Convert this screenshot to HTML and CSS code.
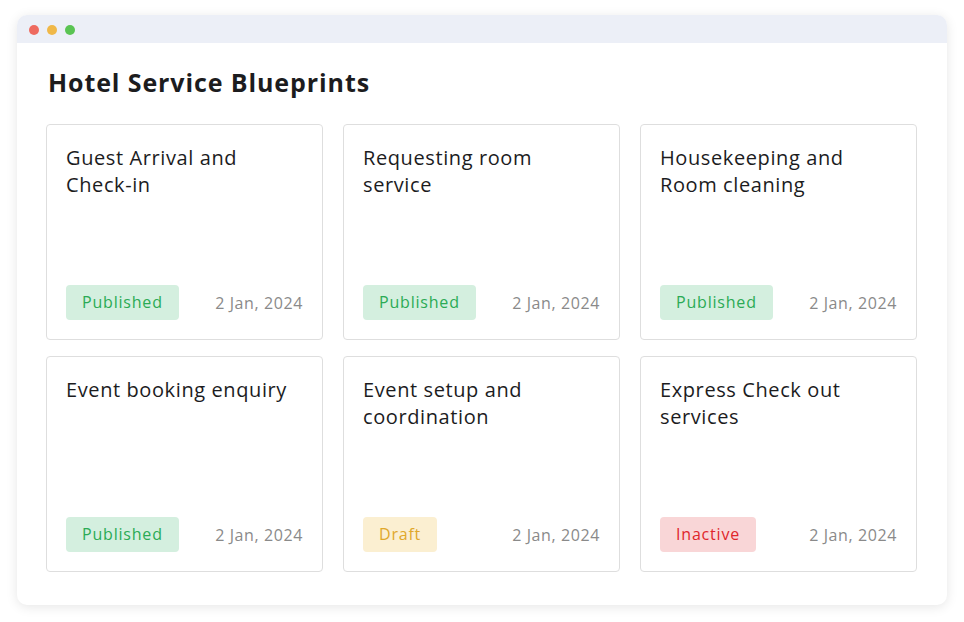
FILE: index.html
```html
<!DOCTYPE html>
<html>
<head>
<meta charset="utf-8">
<link rel="stylesheet" href="styles.css">
</head>
<body>
<div class="window">
  <div class="titlebar">
    <span class="dot red"></span>
    <span class="dot yellow"></span>
    <span class="dot green"></span>
  </div>
  <div class="content">
    <h1 class="heading">Hotel Service Blueprints</h1>
    <div class="grid">
      <div class="card">
        <div class="card-title">Guest Arrival and Check-in</div>
        <div class="card-foot"><span class="badge published">Published</span><span class="date">2 Jan, 2024</span></div>
      </div>
      <div class="card">
        <div class="card-title">Requesting room service</div>
        <div class="card-foot"><span class="badge published">Published</span><span class="date">2 Jan, 2024</span></div>
      </div>
      <div class="card">
        <div class="card-title">Housekeeping and Room cleaning</div>
        <div class="card-foot"><span class="badge published">Published</span><span class="date">2 Jan, 2024</span></div>
      </div>
      <div class="card">
        <div class="card-title">Event booking enquiry</div>
        <div class="card-foot"><span class="badge published">Published</span><span class="date">2 Jan, 2024</span></div>
      </div>
      <div class="card">
        <div class="card-title">Event setup and coordination</div>
        <div class="card-foot"><span class="badge draft">Draft</span><span class="date">2 Jan, 2024</span></div>
      </div>
      <div class="card">
        <div class="card-title">Express Check out services</div>
        <div class="card-foot"><span class="badge inactive">Inactive</span><span class="date">2 Jan, 2024</span></div>
      </div>
    </div>
  </div>
</div>
</body>
</html>
```

FILE: styles.css
```css
html, body {
  margin: 0;
  padding: 0;
  background: #ffffff;
}
body {
  padding: 15px 17px;
  font-family: "Open Sans", "Noto Sans", sans-serif;
  color: #1c1c1e;
}
.window {
  width: 930px;
  background: #ffffff;
  border-radius: 10px;
  box-shadow: 0 2px 12px rgba(0, 0, 0, 0.10);
  overflow: hidden;
}
.titlebar {
  height: 28px;
  box-sizing: border-box;
  padding-top: 2px;
  background: #eceff7;
  display: flex;
  align-items: center;
  gap: 8px;
  padding-left: 12px;
}
.dot {
  width: 10px;
  height: 10px;
  border-radius: 50%;
  display: block;
}
.red { background: #ee6a5f; }
.yellow { background: #f0b848; }
.green { background: #5ac453; }
.content {
  padding: 24px 29px 33px 29px;
}
.heading {
  margin: 0 0 27px 2px;
  font-size: 25px;
  line-height: 30px;
  letter-spacing: 0.9px;
  font-weight: 700;
  color: #1c1c1e;
}
.grid {
  display: grid;
  grid-template-columns: repeat(3, 277px);
  grid-auto-rows: 216px;
  column-gap: 20px;
  row-gap: 16px;
}
.card {
  box-sizing: border-box;
  border: 1px solid #dedede;
  border-radius: 4px;
  padding: 19px 16px 19px 19px;
  display: flex;
  flex-direction: column;
  justify-content: space-between;
}
.card-title {
  font-size: 20px;
  line-height: 27px;
  letter-spacing: 0.6px;
  color: #1c1c1e;
}
.card-foot {
  display: flex;
  align-items: center;
  justify-content: space-between;
  padding-right: 3px;
}
.badge {
  height: 35px;
  line-height: 35px;
  padding: 0 16px;
  border-radius: 4px;
  font-size: 16px;
  letter-spacing: 0.8px;
  font-weight: 500;
}
.published { background: #d4efdf; color: #2bab55; }
.draft { background: #fbefd1; color: #e0a82a; }
.inactive { background: #f9d6d7; color: #e0262b; }
.date {
  font-size: 16px;
  letter-spacing: 0.6px;
  color: #8a8a8a;
}
```
